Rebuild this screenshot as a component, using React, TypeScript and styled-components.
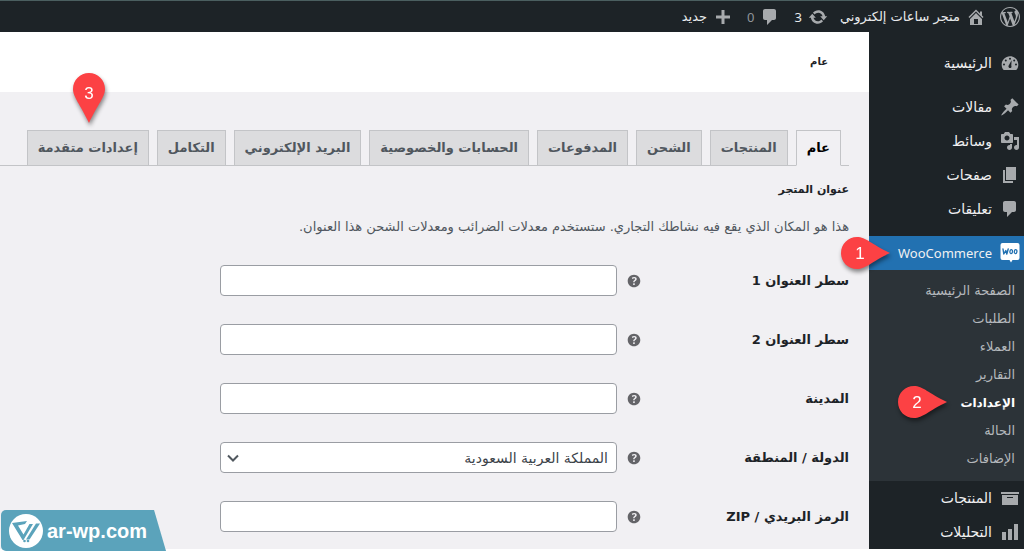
import React from 'react';
import styled, { createGlobalStyle } from 'styled-components';

const arabic = '"DejaVu Sans", sans-serif';

const GlobalStyle = createGlobalStyle`
  *, *::before, *::after { box-sizing: border-box; }
  body {
    margin: 0;
    background: #fff;
    color: #3c434a;
    font-family: ${arabic};
    font-size: 13px;
    line-height: 20px;
  }
  a { color: inherit; text-decoration: none; }
`;

const Page = styled.div`
  position: relative;
  min-height: 100vh;
`;

const AdminBar = styled.header`
  display: flex;
  align-items: center;
  height: 32px;
  padding-inline: 4px 8px;
  border-top: 1px solid #4b5f60;
  background: #1d2327;
  color: #e8eaec;
`;

const BarLink = styled.a<{ $gap?: number; $dim?: boolean }>`
  display: flex;
  align-items: center;
  gap: 6px;
  margin-inline-end: ${(p) => p.$gap ?? 14}px;
  color: ${(p) => (p.$dim ? '#8f9499' : 'inherit')};
  white-space: nowrap;
`;

const Columns = styled.div`
  display: flex;
  align-items: stretch;
`;

const Sidebar = styled.nav`
  flex: 0 0 155px;
  padding-top: 14px;
  background: #1d2327;
  color: #f0f0f1;
`;

const MenuList = styled.ul`
  margin: 0;
  padding: 0;
  list-style: none;
`;

const MenuItem = styled.li<{ $spaced?: boolean }>`
  position: relative;
  margin-top: ${(p) => (p.$spaced ? 10 : 0)}px;
`;

const MenuLink = styled.a<{ $active?: boolean }>`
  display: flex;
  align-items: center;
  gap: 8px;
  height: 34px;
  padding-inline: 4px;
  background: ${(p) => (p.$active ? '#2271b1' : 'transparent')};
  font-size: 14px;
`;

const Latin = styled.span`
  font-family: "Noto Sans", sans-serif;
  font-size: 13px;
`;

const SubMenu = styled.ul`
  margin: 0;
  padding: 7px 9px 8px;
  background: #2c3338;
  list-style: none;
`;

const SubItem = styled.li`
  position: relative;
`;

const SubLink = styled.a<{ $current?: boolean }>`
  display: block;
  line-height: 28px;
  color: ${(p) => (p.$current ? '#fff' : '#b4b8bc')};
  font-size: ${(p) => (p.$current ? 12 : 13)}px;
  font-weight: ${(p) => (p.$current ? 700 : 400)};
`;

const Main = styled.main`
  flex: 1;
  min-width: 0;
  background: #f1f0f3;
`;

const TitleBar = styled.div`
  display: flex;
  align-items: center;
  height: 60px;
  padding-inline: 41px;
  background: #fff;
`;

const Title = styled.h1`
  margin: 0;
  color: #1d2327;
  font-size: 10px;
`;

const Settings = styled.form`
  padding-top: 38px;
  padding-inline-start: 20px;
`;

const Tabs = styled.nav`
  display: flex;
  gap: 8px;
  padding-inline-start: 8px;
  border-bottom: 1px solid #c3c4c7;
`;

const TabWrap = styled.div`
  position: relative;
  display: flex;
`;

const Tab = styled.a<{ $active?: boolean }>`
  height: 36px;
  margin-bottom: -1px;
  padding-inline: 10px;
  border: 1px solid #c3c4c7;
  border-bottom-color: ${(p) => (p.$active ? '#f1f0f3' : '#c3c4c7')};
  background: ${(p) => (p.$active ? '#f1f0f3' : '#dcdcde')};
  color: ${(p) => (p.$active ? '#000' : '#50575e')};
  font-weight: 700;
  line-height: 34px;
  white-space: nowrap;
`;

const SectionTitle = styled.h2`
  margin: 14px 0 17px;
  color: #1d2327;
  font-size: 11px;
  line-height: 20px;
`;

const Intro = styled.p`
  margin: 0 0 14px;
  color: #50575e;
`;

const Field = styled.div`
  display: flex;
  align-items: center;
  height: 59px;
`;

const FieldLabel = styled.label`
  flex: 0 0 206px;
  color: #1d2327;
  font-weight: 700;
`;

const Help = styled.span`
  display: flex;
  flex: 0 0 26px;
  color: #646468;
`;

const control = `
  display: block;
  width: 100%;
  height: 31px;
  padding: 0 8px;
  border: 1px solid #9a9da3;
  border-radius: 4px;
  background: #fff;
  color: #3c434a;
  font-family: ${arabic};
  font-size: 14px;
`;

const ControlBox = styled.div`
  position: relative;
  flex: 0 1 397px;
`;

const TextInput = styled.input`
  ${control}
`;

const Select = styled.select`
  ${control}
  appearance: none;
`;

const Chevron = styled.svg`
  position: absolute;
  left: 7px;
  top: 10px;
  pointer-events: none;
`;

const PinBox = styled.svg<{ $left: number; $top: number }>`
  position: absolute;
  left: ${(p) => p.$left}px;
  top: ${(p) => p.$top}px;
  z-index: 2;
  overflow: visible;
  filter: drop-shadow(1px 3px 2px rgba(0, 0, 0, 0.45));
  pointer-events: none;
`;

const Watermark = styled.a`
  position: absolute;
  left: 1px;
  bottom: 1px;
  z-index: 3;
  display: flex;
  align-items: center;
  gap: 4px;
  height: 41px;
  padding: 0 19px 0 8px;
  border-radius: 5px 0 0 5px;
  background: #5ba3bb;
  clip-path: polygon(0 0, calc(100% - 12px) 0, 100% 100%, 0 100%);
  color: #fff;
  direction: ltr;
  font-family: "Liberation Sans", sans-serif;
  font-size: 20px;
  font-weight: 700;
`;

const shapes = {
  wordpress:
    'M20 10c0-5.51-4.49-10-10-10C4.48 0 0 4.49 0 10c0 5.52 4.48 10 10 10 5.51 0 10-4.48 10-10zM7.78 15.37L4.37 6.22c.55-.02 1.17-.08 1.17-.08.5-.06.44-1.13-.06-1.11 0 0-1.45.11-2.37.11-.18 0-.37 0-.58-.01C4.12 2.69 6.87 1.11 10 1.11c2.33 0 4.45.87 6.05 2.34-.68-.11-1.65.39-1.65 1.58 0 .74.45 1.36.9 2.1.35.61.55 1.36.55 2.46 0 1.49-1.4 5-1.4 5l-3.03-8.37c.54-.02.82-.17.82-.17.5-.05.44-1.25-.06-1.22 0 0-1.44.12-2.38.12-.87 0-2.33-.12-2.33-.12-.5-.03-.56 1.2-.06 1.22l.92.08 1.26 3.41zM17.41 10c.24-.64.74-1.87.43-4.25.7 1.29 1.05 2.71 1.05 4.25 0 3.29-1.73 6.24-4.4 7.78.97-2.59 1.94-5.2 2.92-7.78zM6.1 18.09C3.12 16.65 1.11 13.53 1.11 10c0-1.3.23-2.48.72-3.59C3.25 10.3 4.67 14.2 6.1 18.09zm4.03-6.63l2.58 6.98c-.86.29-1.76.45-2.71.45-.79 0-1.57-.11-2.29-.33.81-2.38 1.62-4.74 2.42-7.1z',
  home: 'M16 8.5l1.53 1.53-1.06 1.06L10 4.6l-6.47 6.49-1.06-1.06L10 2.5l4 4v-2h2v4zm-6-2.46l6 5.99V18H4v-5.97zM12 17v-5H8v5h4z',
  update:
    'M10.2 3.28c3.53 0 6.43 2.61 6.92 6h2.08l-3.5 4-3.5-4h2.32c-.45-1.97-2.21-3.45-4.32-3.45-1.45 0-2.73.71-3.54 1.78L4.95 5.66C6.23 4.2 8.11 3.28 10.2 3.28zm-.4 13.44c-3.52 0-6.43-2.61-6.92-6H.8l3.5-4 3.5 4H5.48c.45 1.97 2.21 3.45 4.32 3.45 1.45 0 2.73-.71 3.54-1.78l1.71 1.95c-1.28 1.46-3.15 2.38-5.25 2.38z',
  comment: 'M5 2h9c1.1 0 2 .9 2 2v7c0 1.1-.9 2-2 2h-2l-5 5v-5H5c-1.1 0-2-.9-2-2V4c0-1.1.9-2 2-2z',
  plus: 'M17 8.5v3h-5.5V17h-3v-5.5H3v-3h5.5V3h3v5.5z',
  dashboard:
    'M3.76 17h12.48c1.34-1.44 2.09-3.33 2.09-5.34C18.33 7.06 14.6 3.33 10 3.33S1.67 7.06 1.67 11.66c0 2.01.75 3.9 2.09 5.34zM10 4.7a1 1 0 1 1 0 2 1 1 0 0 1 0-2zM5.8 6.4a1 1 0 1 1 0 2 1 1 0 0 1 0-2zM14.2 6.4a1 1 0 1 1 0 2 1 1 0 0 1 0-2zM4 10.4a1 1 0 1 1 0 2 1 1 0 0 1 0-2zM16 10.4a1 1 0 1 1 0 2 1 1 0 0 1 0-2zM11.6 7.3l-.3 5.2c.5 1.3-.1 2.5-1.3 2.5s-2-1.2-1.3-2.4z',
  pin: 'M10.44 3.02l1.82-1.82 6.36 6.35-1.83 1.82c-1.05-.68-2.48-.57-3.41.36l-.75.75c-.92.93-1.04 2.35-.35 3.41l-1.83 1.82-2.41-2.41-2.8 2.79c-.42.42-3.38 2.71-3.8 2.29s1.86-3.39 2.28-3.81l2.79-2.79L4.1 9.36l1.83-1.82c1.05.69 2.48.57 3.4-.36l.75-.75c.93-.92 1.05-2.35.36-3.41z',
  media:
    'M13 11V4c0-.55-.45-1-1-1h-1.67L9 1H5L3.67 3H2c-.55 0-1 .45-1 1v7c0 .55.45 1 1 1h10c.55 0 1-.45 1-1zM7 4.5c1.38 0 2.5 1.12 2.5 2.5S8.38 9.5 7 9.5 4.5 8.38 4.5 7 5.62 4.5 7 4.5zM14 6h5v10.5c0 1.38-1.12 2.5-2.5 2.5S14 17.88 14 16.5s1.12-2.5 2.5-2.5c.17 0 .34.02.5.05V9h-3V6zm-4 8.05V13h2v3.5c0 1.38-1.12 2.5-2.5 2.5S7 17.88 7 16.5 8.12 14 9.5 14c.17 0 .34.02.5.05z',
  page: 'M6 15V2h10v13H6zm-1 1h8v2H3V5h2v11z',
  archive: 'M19 4v2H1V4h18zM2 7h16v10H2V7zm11 3V9H7v1h6z',
  chart: 'M18 18V2h-4v16h4zm-6 0V7H8v11h4zm-6 0v-8H2v8h4z',
  help: 'M17 10c0-3.87-3.14-7-7-7-3.87 0-7 3.13-7 7s3.13 7 7 7c3.86 0 7-3.13 7-7zm-6.3 1.48H9.14v-.43c0-.38.08-.7.24-.98s.46-.57.88-.89c.41-.29.68-.53.81-.71.14-.18.2-.39.2-.62 0-.25-.09-.44-.28-.58-.19-.13-.45-.19-.79-.19-.58 0-1.25.19-2 .57l-.64-1.28c.87-.49 1.8-.74 2.77-.74.81 0 1.45.2 1.92.58.48.39.71.91.71 1.55 0 .43-.09.8-.29 1.11-.19.32-.57.67-1.11 1.06-.38.28-.61.49-.71.63-.1.15-.15.34-.15.57v.35zm-1.47 2.74c-.18-.17-.27-.42-.27-.73 0-.33.08-.58.26-.75s.43-.25.77-.25c.32 0 .57.09.75.26s.27.42.27.74c0 .3-.09.55-.27.72-.18.18-.43.27-.75.27-.33 0-.58-.09-.76-.26z',
};

type IconName = keyof typeof shapes;

const Icon = ({ name, size = 20, color = '#a7aaad' }: { name: IconName; size?: number; color?: string }) => (
  <svg width={size} height={size} viewBox="0 0 20 20" fill={color} fillRule="evenodd" aria-hidden="true">
    <path d={shapes[name]} />
  </svg>
);

const WooIcon = () => (
  <svg width="20" height="20" viewBox="0 0 20 20" fill="none" aria-hidden="true">
    <path d="M2.5 0h15q2 0 2 2v13q0 2-2 2h-5l-1.500 2.500-1.500-2.500h-7q-2 0-2-2V2q0-2 2-2z" fill="#fff" />
    <path d="M3 6l.8 5 2-3.500 1 3.500L8.200 6" stroke="#2271b1" strokeWidth="1.4" strokeLinejoin="round" strokeLinecap="round" />
    <ellipse cx="11.2" cy="8.6" rx="1.3" ry="2" stroke="#2271b1" strokeWidth="1.3" transform="rotate(10 11.2 8.6)" />
    <ellipse cx="15.6" cy="8.6" rx="1.3" ry="2" stroke="#2271b1" strokeWidth="1.3" transform="rotate(10 15.6 8.6)" />
  </svg>
);

const Pin = ({ label, left, top, down }: { label: string; left: number; top: number; down?: boolean }) => (
  <PinBox $left={left} $top={top} width={down ? 32 : 50} height={down ? 50 : 32}>
    <path
      fill="#fc4144"
      d={
        down
          ? 'M16 0C25 0 32 7 32 16C32 24 25 31 16 50C7 31 0 24 0 16C0 7 7 0 16 0Z'
          : 'M16 0C7 0 0 7 0 16C0 25 7 32 16 32C25 32 30 25 49 16C30 7 25 0 16 0Z'
      }
    />
    <text
      x={down ? 16 : 19}
      y={down ? 26 : 22}
      fill="#fff"
      fontFamily='"Liberation Sans", sans-serif'
      fontSize="17"
      textAnchor="middle"
    >
      {label}
    </text>
  </PinBox>
);

const WatermarkLogo = () => (
  <svg width="34" height="34" viewBox="0 0 34 34" aria-hidden="true">
    <circle cx="17" cy="17" r="17" fill="#fff" />
    <g fill="#5ba3bb">
      <path d="M3 9L18 7L16 10L9 11.500L14.500 20.500L20.500 10H24L14.500 26H13.500z" />
      <path d="M27 9.500H31L20.500 25.500H17z" />
      <circle cx="15.500" cy="27" r="1.300" />
      <circle cx="19" cy="27" r="1.300" />
    </g>
  </svg>
);

const topMenu: { icon: IconName; text: string; spaced?: boolean }[] = [
  { icon: 'dashboard', text: 'الرئيسية' },
  { icon: 'pin', text: 'مقالات', spaced: true },
  { icon: 'media', text: 'وسائط' },
  { icon: 'page', text: 'صفحات' },
  { icon: 'comment', text: 'تعليقات' },
];

const subMenu = ['الصفحة الرئيسية', 'الطلبات', 'العملاء', 'التقارير', 'الإعدادات', 'الحالة', 'الإضافات'];

const bottomMenu: { icon: IconName; text: string }[] = [
  { icon: 'archive', text: 'المنتجات' },
  { icon: 'chart', text: 'التحليلات' },
];

const tabs = [
  'عام',
  'المنتجات',
  'الشحن',
  'المدفوعات',
  'الحسابات والخصوصية',
  'البريد الإلكتروني',
  'التكامل',
  'إعدادات متقدمة',
];

const fields = [
  { id: 'address1', label: 'سطر العنوان 1' },
  { id: 'address2', label: 'سطر العنوان 2' },
  { id: 'city', label: 'المدينة' },
  { id: 'country', label: 'الدولة / المنطقة', value: 'المملكة العربية السعودية' },
  { id: 'postcode', label: 'الرمز البريدي / ZIP' },
];

export default function App() {
  return (
    <Page dir="rtl" lang="ar">
      <GlobalStyle />
      <AdminBar>
        <BarLink href="#wp" aria-label="ووردبريس">
          <Icon name="wordpress" />
        </BarLink>
        <BarLink href="#site" $gap={12}>
          <Icon name="home" />
          متجر ساعات إلكتروني
        </BarLink>
        <BarLink href="#updates">
          <Icon name="update" />
          <Latin>3</Latin>
        </BarLink>
        <BarLink href="#comments" $dim>
          <Icon name="comment" />
          <Latin>0</Latin>
        </BarLink>
        <BarLink href="#new">
          <Icon name="plus" />
          جديد
        </BarLink>
      </AdminBar>
      <Columns>
        <Sidebar>
          <MenuList>
            {topMenu.map((item) => (
              <MenuItem key={item.text} $spaced={item.spaced}>
                <MenuLink href="#menu">
                  <Icon name={item.icon} />
                  {item.text}
                </MenuLink>
              </MenuItem>
            ))}
            <MenuItem $spaced>
              <MenuLink href="#woocommerce" $active>
                <WooIcon />
                <Latin>WooCommerce</Latin>
              </MenuLink>
              <Pin label="1" left={-28} top={1} />
              <SubMenu>
                {subMenu.map((text, i) => (
                  <SubItem key={text}>
                    <SubLink href="#sub" $current={i === 4}>
                      {text}
                    </SubLink>
                    {i === 4 && <Pin label="2" left={20} top={-3} />}
                  </SubItem>
                ))}
              </SubMenu>
            </MenuItem>
            {bottomMenu.map((item) => (
              <MenuItem key={item.text}>
                <MenuLink href="#menu">
                  <Icon name={item.icon} />
                  {item.text}
                </MenuLink>
              </MenuItem>
            ))}
          </MenuList>
        </Sidebar>
        <Main>
          <TitleBar>
            <Title>عام</Title>
          </TitleBar>
          <Settings>
            <Tabs>
              {tabs.map((text, i) => (
                <TabWrap key={text}>
                  <Tab href="#tab" $active={i === 0}>
                    {text}
                  </Tab>
                  {i === 7 && <Pin label="3" left={46} top={-57} down />}
                </TabWrap>
              ))}
            </Tabs>
            <SectionTitle>عنوان المتجر</SectionTitle>
            <Intro>هذا هو المكان الذي يقع فيه نشاطك التجاري. ستستخدم معدلات الضرائب ومعدلات الشحن هذا العنوان.</Intro>
            {fields.map((f) => (
              <Field key={f.id}>
                <FieldLabel htmlFor={f.id}>{f.label}</FieldLabel>
                <Help>
                  <Icon name="help" size={18} color="currentColor" />
                </Help>
                <ControlBox>
                  {f.value ? (
                    <>
                      <Select id={f.id} defaultValue={f.value}>
                        <option>{f.value}</option>
                      </Select>
                      <Chevron width="12" height="12" viewBox="0 0 12 12" fill="none" aria-hidden="true">
                        <path d="M1 3.5l5 5 5-5" stroke="#50575e" strokeWidth="2" />
                      </Chevron>
                    </>
                  ) : (
                    <TextInput id={f.id} type="text" />
                  )}
                </ControlBox>
              </Field>
            ))}
          </Settings>
        </Main>
      </Columns>
      <Watermark href="#ar-wp">
        <WatermarkLogo />
        ar-wp.com
      </Watermark>
    </Page>
  );
}
